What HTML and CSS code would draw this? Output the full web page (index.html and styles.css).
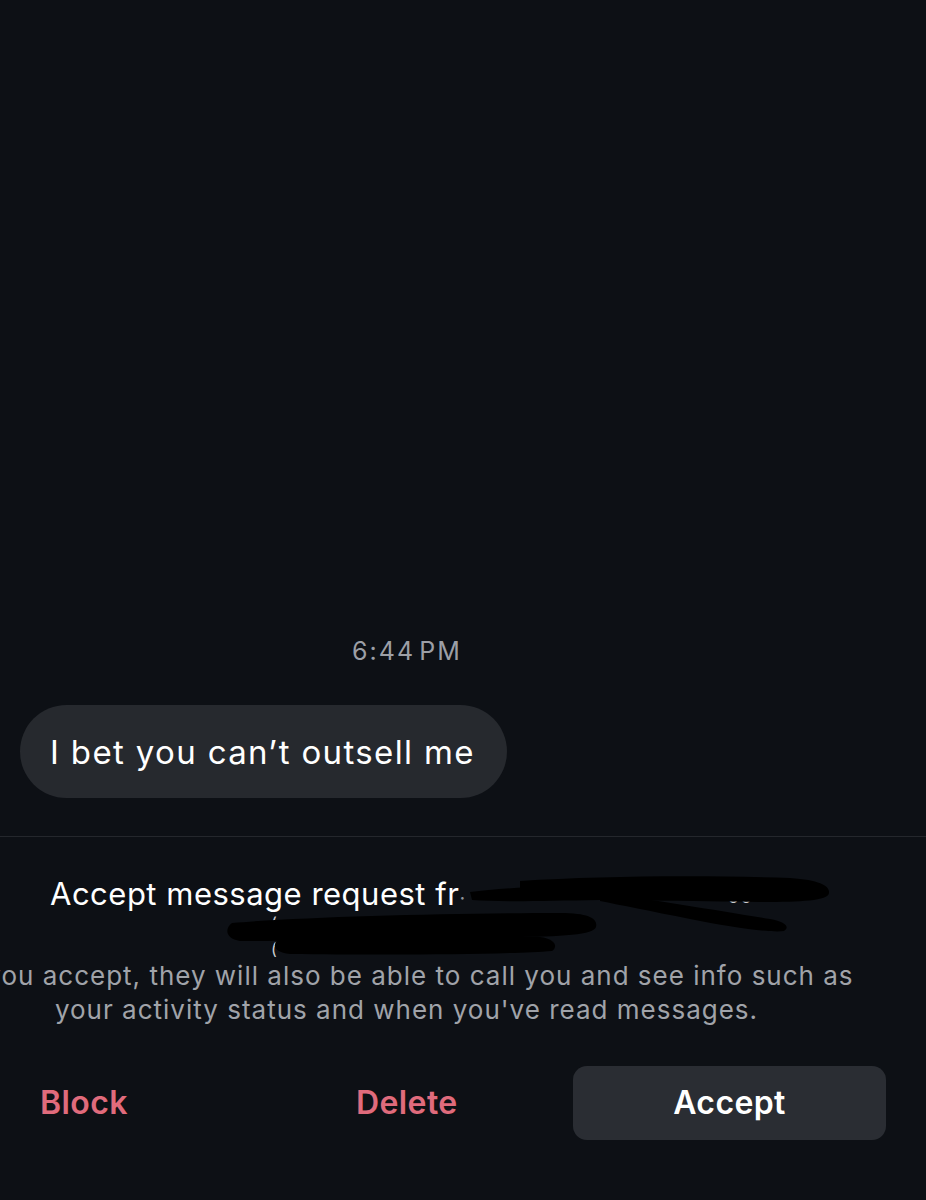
FILE: index.html
```html
<!DOCTYPE html>
<html lang="en">
<head>
<meta charset="utf-8">
<title>Message request</title>
<link rel="stylesheet" href="styles.css">
</head>
<body>
<div class="screen">
  <section class="chat">
    <div class="timestamp">6:44&#8202;PM</div>
    <div class="row">
      <div class="bubble">I bet you can’t outsell me</div>
    </div>
  </section>
  <section class="request">
    <div class="title-wrap">
      <h1 class="title">Accept message request fr<span class="stray">·</span></h1>
      <span class="mark m1">(</span>
      <span class="mark m3">(</span>
      <span class="mark m2">oo</span>
      <svg class="redact" width="926" height="90" viewBox="0 0 926 90" aria-hidden="true">
        <path d="M520 6 C600 1 700 0 790 3 C820 5 830 11 829 18 C828 26 800 27 760 27 C700 26 600 25 520 25 Z" fill="#000"/>
        <path d="M470 17 C500 13 540 11 600 11 L600 25 C540 26 500 27 472 25 Z" fill="#000"/>
        <path d="M600 18 C650 24 720 36 770 44 C786 47 790 52 784 56 C770 58 730 52 690 44 C650 36 620 30 600 26 Z" fill="#000"/>
        <path d="M232 48 C300 42 450 38 560 38 C590 38 598 44 596 52 C594 60 560 62 500 62 C400 64 300 66 240 66 C226 64 224 54 232 48 Z" fill="#000"/>
        <path d="M280 64 C350 60 460 60 540 62 C556 64 558 72 552 76 C500 80 380 80 290 79 C272 77 272 68 280 64 Z" fill="#000"/>
      </svg>
    </div>
    <p class="info"><span class="line">If you accept, they will also be able to call you and see info such as</span> <span class="line">your activity status and when you've read messages.</span></p>
    <div class="actions">
      <button class="action block" type="button">Block</button>
      <button class="action delete" type="button">Delete</button>
      <button class="action accept" type="button">Accept</button>
    </div>
  </section>
</div>
</body>
</html>
```

FILE: styles.css
```css
* {
  box-sizing: border-box;
}

html, body {
  margin: 0;
  padding: 0;
  background: #0d1015;
}

body {
  font-family: Inter, "Noto Sans", "Liberation Sans", sans-serif;
  color: #fff;
  overflow: hidden;
}

.screen {
  width: 926px;
  height: 1200px;
  display: flex;
  flex-direction: column;
  overflow: hidden;
}

.chat {
  height: 837px;
  display: flex;
  flex-direction: column;
  justify-content: flex-end;
  padding-bottom: 38px;
  border-bottom: 1px solid #24272c;
}

.timestamp {
  width: 814px;
  text-align: center;
  font-size: 25px;
  line-height: 30px;
  color: #9c9fa6;
  margin-bottom: 39px;
  letter-spacing: 2px;
}

.row {
  display: flex;
  padding-left: 20px;
}

.bubble {
  background: #26292e;
  border-radius: 47px;
  height: 93px;
  display: flex;
  align-items: center;
  padding: 0 32px 0 30px;
  font-size: 33px;
  letter-spacing: 1.35px;
  color: #fff;
}

.request {
  flex: 1;
  display: flex;
  flex-direction: column;
  padding-top: 38px;
}

.title-wrap {
  position: relative;
  height: 84px;
}

.title {
  margin: 0;
  padding-left: 50px;
  font-size: 31px;
  font-weight: 400;
  line-height: 38px;
  color: #fff;
  letter-spacing: 0.5px;
}

.stray {
  color: #8f939a;
  font-size: 20px;
}

.redact {
  position: absolute;
  left: 0;
  top: 0;
  overflow: visible;
}

.mark {
  position: absolute;
  color: #cfd1d4;
  font-size: 16px;
  line-height: 16px;
}

.m1 {
  left: 271px;
  top: 40px;
}

.m3 {
  left: 271px;
  top: 66px;
}

.m2 {
  left: 728px;
  top: 14px;
  font-size: 18px;
  letter-spacing: 2px;
}

.info {
  margin: 0 0 0 -100px;
  width: 1013px;
  text-align: center;
  font-size: 26px;
  line-height: 34px;
  color: #a0a3a9;
  letter-spacing: 1px;
}

.line {
  display: block;
  white-space: nowrap;
}

.actions {
  display: flex;
  align-items: center;
  padding: 0 40px;
  margin-top: 39px;
}

.action {
  font-family: inherit;
  font-size: 32px;
  font-weight: 600;
  border: 0;
  background: none;
  padding: 0;
  margin: 0;
  line-height: 38px;
  letter-spacing: 0.4px;
}

.block {
  color: #e06b7c;
  width: 316px;
  text-align: left;
}

.delete {
  color: #e06b7c;
  width: 101px;
  text-align: center;
  margin-right: 116px;
}

.accept {
  width: 313px;
  height: 74px;
  background: #2a2d33;
  border-radius: 14px;
  color: #fff;
  text-align: center;
}
```
